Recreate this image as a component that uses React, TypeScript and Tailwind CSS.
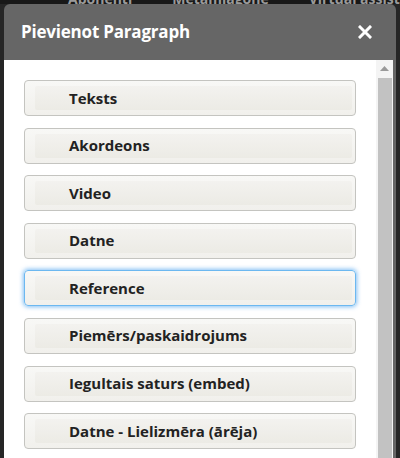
import React from "react";

const items = [
  "Teksts",
  "Akordeons",
  "Video",
  "Datne",
  "Reference",
  "Piemērs/paskaidrojums",
  "Iegultais saturs (embed)",
  "Datne - Lielizmēra (ārēja)",
];

function ItemButton({ label, focused }: { label: string; focused?: boolean }) {
  return (
    <button
      className={`relative h-[36px] w-full shrink-0 rounded-[4px] border text-left ${
        focused
          ? "border-[#6cb8f0] shadow-[0_0_4px_1px_rgba(90,170,240,0.75)]"
          : "border-[#c4c4c0]"
      } bg-gradient-to-b from-[#f8f8f6] to-[#f1f0ec]`}
    >
      <div className="my-[5px] ml-[10px] mr-[3px] flex h-[24px] items-center rounded-[2px] bg-gradient-to-b from-[#f3f2ef] to-[#ecebe5] pl-[34px]">
        <span className="text-[15px] font-bold leading-none text-[#222]">{label}</span>
      </div>
    </button>
  );
}

export default function App() {
  return (
    <div
      className="flex h-[458px] w-[400px] flex-col overflow-hidden bg-[#262626]"
      style={{ fontFamily: '"Open Sans", "DejaVu Sans", sans-serif' }}
    >
      {/* nav behind the dialog */}
      <div className="flex h-[4px] shrink-0 gap-[40px] overflow-hidden bg-[#181818] pl-[68px] text-[14px] font-bold text-[#9a9a9a]">
        <span className="-mt-[12px]">Abonenti</span>
        <span className="-mt-[12px]">Metamlagone</span>
        <span className="-mt-[12px]">Virtual assist</span>
      </div>

      <div className="ml-[4px] flex w-[392px] flex-1 flex-col overflow-hidden rounded-t-[6px] bg-[#666]">
        {/* Header */}
        <div className="flex h-[56px] shrink-0 items-center justify-between pl-[17px] pr-[24px]">
          <h2 className="text-[17px] font-bold tracking-[-0.2px] text-white">Pievienot Paragraph</h2>
          <button className="text-white">
            <svg width="14" height="14" viewBox="0 0 14 14">
              <path d="M2 2 L12 12 M12 2 L2 12" stroke="white" strokeWidth="3" strokeLinecap="square" />
            </svg>
          </button>
        </div>

        {/* Body */}
        <div className="mr-[3px] flex flex-1 bg-white">
          <div className="flex flex-1 flex-col gap-[11.6px] pl-[20px] pr-[20px] pt-[20px]">
            {items.map((label) => (
              <ItemButton key={label} label={label} focused={label === "Reference"} />
            ))}
          </div>
          {/* Scrollbar */}
          <div className="flex w-[17px] shrink-0 flex-col items-center bg-[#f4f4f4] pt-[6px]">
            <svg width="9" height="5" viewBox="0 0 9 5">
              <path d="M0 5 L4.5 0 L9 5 Z" fill="#9a9a9a" />
            </svg>
            <div className="mt-[7px] w-[14px] flex-1 bg-[#c2c2c2]" />
          </div>
        </div>
      </div>
    </div>
  );
}
